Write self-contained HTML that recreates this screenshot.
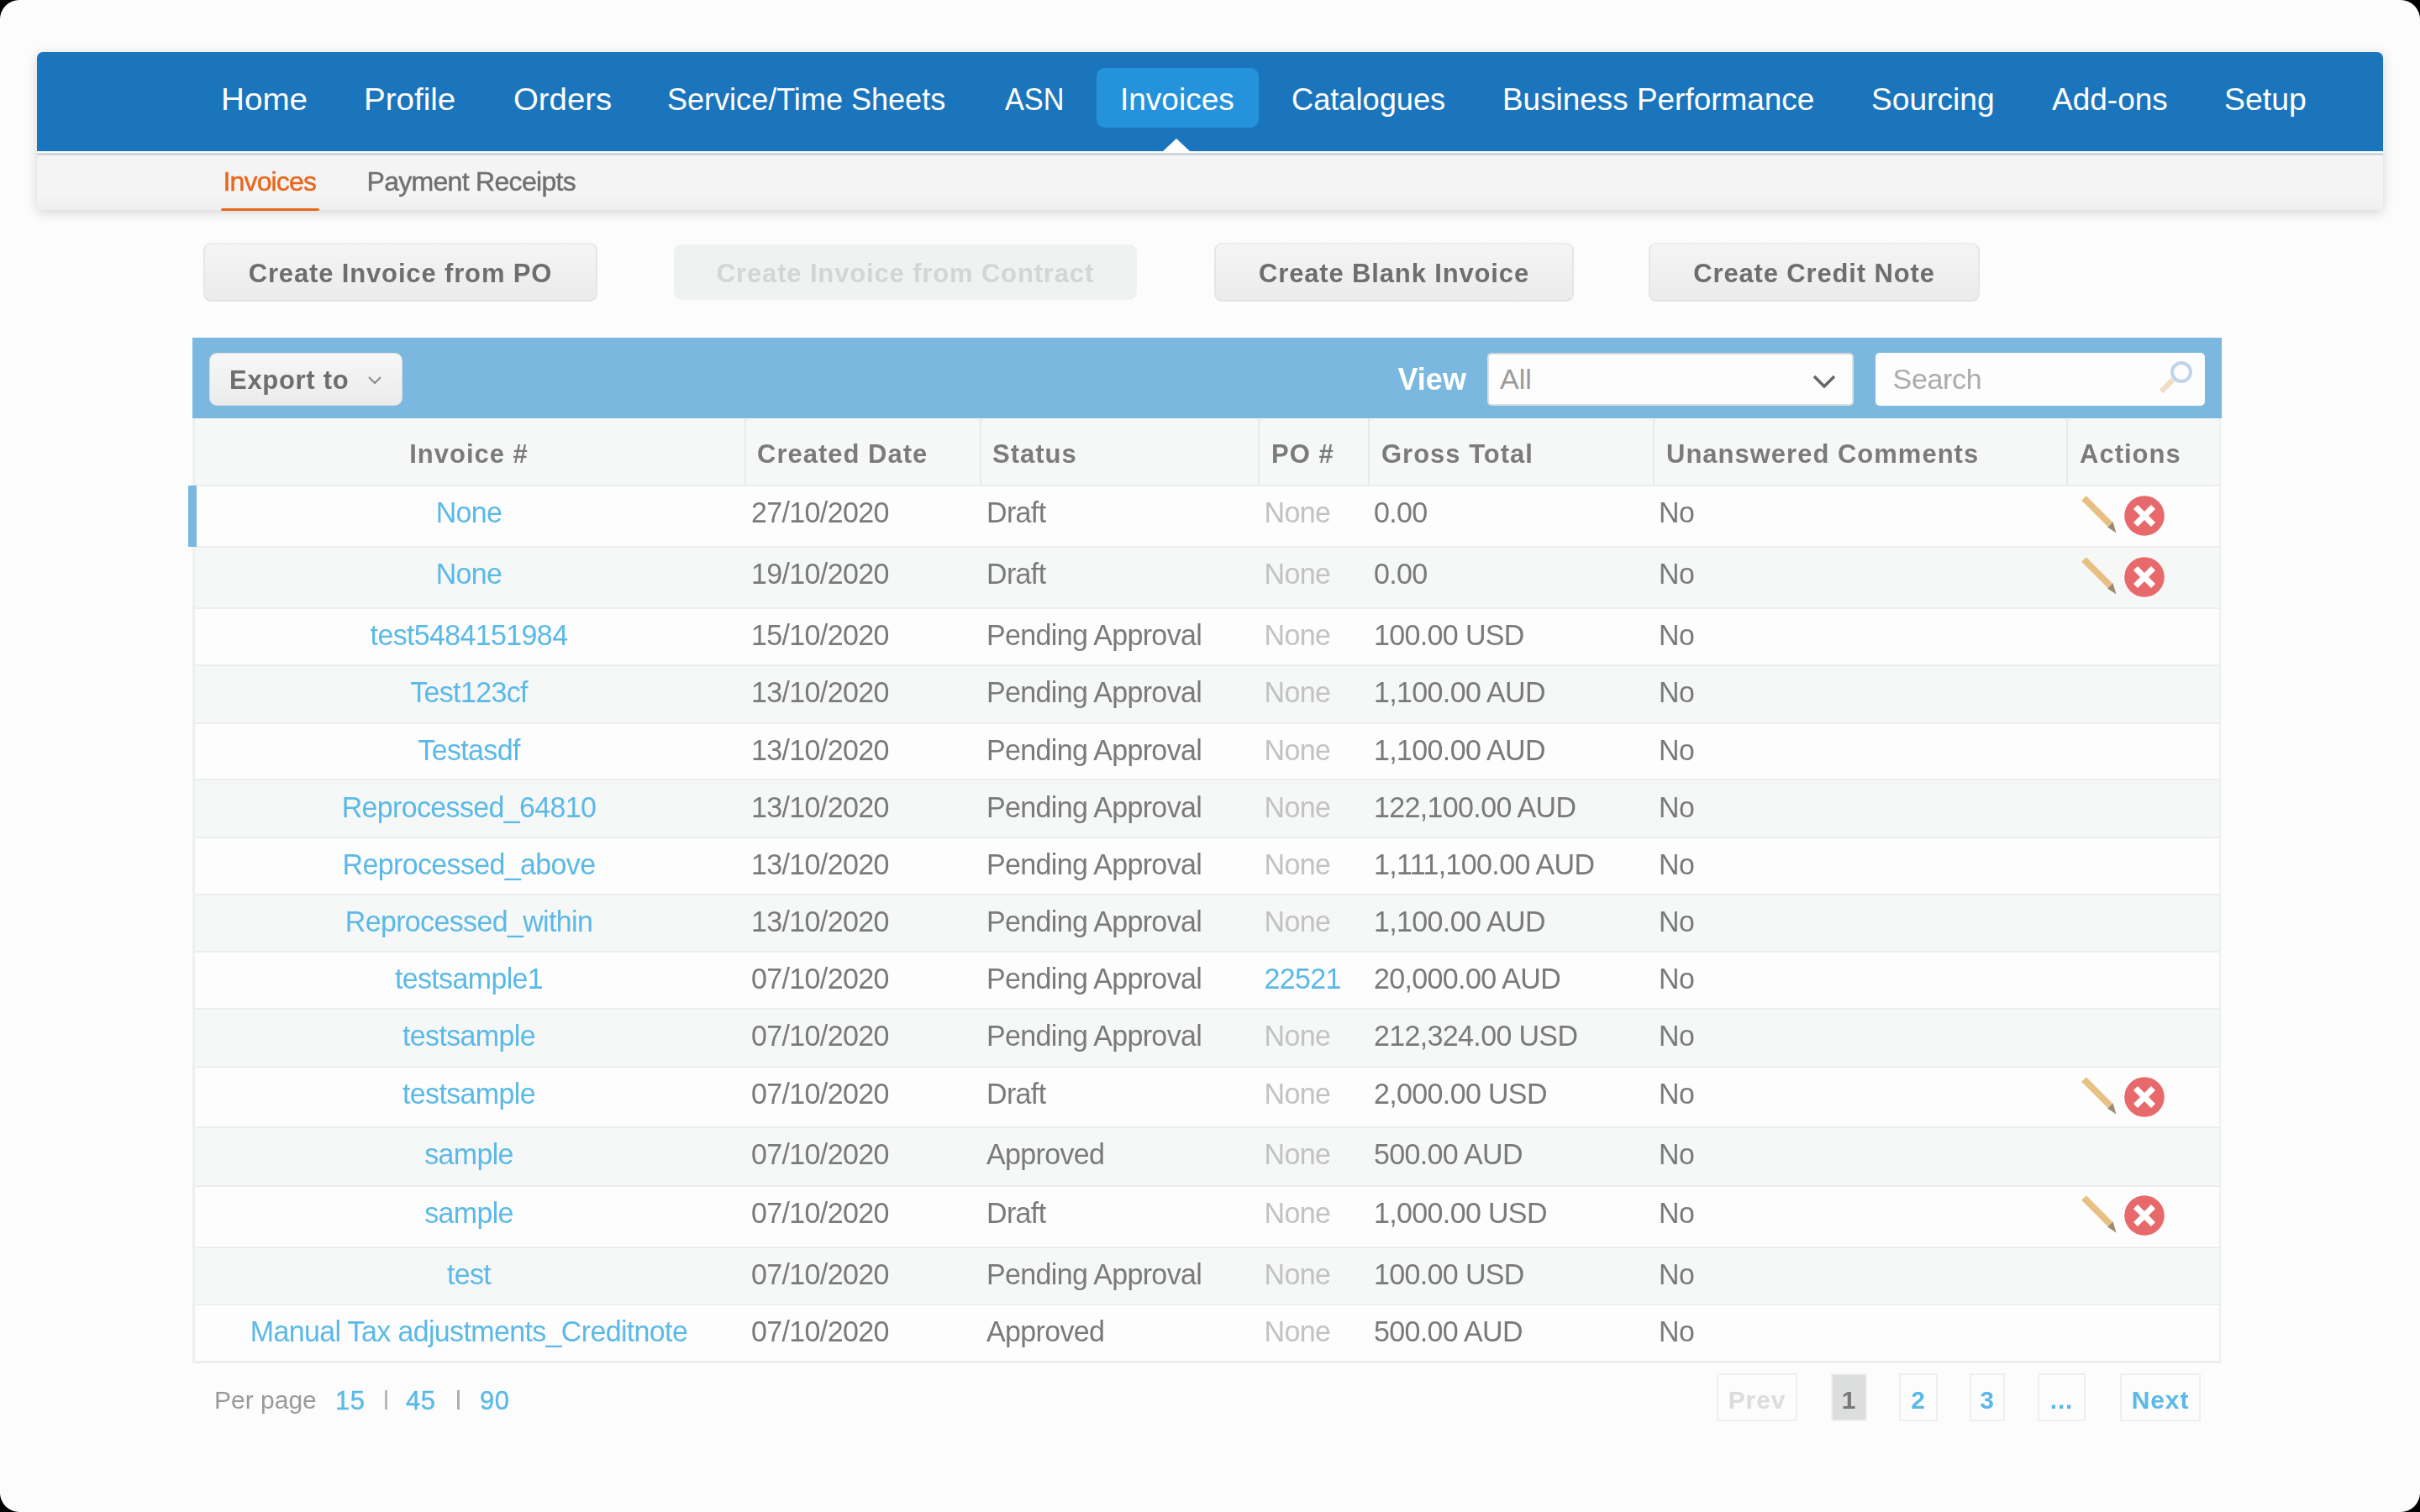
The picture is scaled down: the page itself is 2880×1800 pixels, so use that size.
<!DOCTYPE html>
<html><head><meta charset="utf-8"><title>Invoices</title>
<style>
html,body{margin:0;padding:0;background:#000;}
body{width:2880px;height:1800px;overflow:hidden;position:relative;font-family:"Liberation Sans",sans-serif;}
.page{position:absolute;left:0;top:0;width:2880px;height:1800px;background:#fcfcfc;border-radius:23px;overflow:hidden;}
.r{position:absolute;}
.t{position:absolute;white-space:nowrap;}
.inner{position:absolute;left:0;top:0;width:2880px;height:1800px;filter:blur(0.5px);}
</style></head><body><div class="page"><div class="inner">
<div class="r" style="left:44px;top:62px;width:2792px;height:188px;background:linear-gradient(#f4f4f4 0px,#f4f4f4 170px,#efefef 188px);border-radius:7px 7px 4px 4px;box-shadow:0 3px 14px rgba(0,0,0,0.16);"></div>
<div class="r" style="left:44px;top:62px;width:2792px;height:118px;background:#1b75bd;border-radius:7px 7px 0 0;"></div>
<div class="r" style="left:44px;top:180px;width:2792px;height:2px;background:#ffffff;"></div>
<div class="r" style="left:44px;top:182px;width:2792px;height:3px;background:#ccd8dc;"></div>
<div class="r" style="left:1305px;top:81px;width:193px;height:71px;background:#2593db;border-radius:10px;"></div>
<div class="r" style="left:1384px;top:165px;width:0;height:0;border-left:16px solid transparent;border-right:16px solid transparent;border-bottom:15px solid #fff;"></div>
<div class="t" style="left:262.85px;top:99.68px;font-size:37px;line-height:37px;color:#ffffff;transform:scaleX(1.0441);transform-origin:0 0;">Home</div>
<div class="t" style="left:433.47px;top:99.68px;font-size:37px;line-height:37px;color:#ffffff;transform:scaleX(1.0420);transform-origin:0 0;">Profile</div>
<div class="t" style="left:610.52px;top:99.68px;font-size:37px;line-height:37px;color:#ffffff;transform:scaleX(1.0358);transform-origin:0 0;">Orders</div>
<div class="t" style="left:794.47px;top:99.68px;font-size:37px;line-height:37px;color:#ffffff;transform:scaleX(0.9741);transform-origin:0 0;">Service/Time Sheets</div>
<div class="t" style="left:1196.08px;top:99.68px;font-size:37px;line-height:37px;color:#ffffff;transform:scaleX(0.9250);transform-origin:0 0;">ASN</div>
<div class="t" style="left:1333.0px;top:99.68px;font-size:37px;line-height:37px;color:#ffffff;transform:scaleX(1.0000);transform-origin:0 0;">Invoices</div>
<div class="t" style="left:1537.04px;top:99.68px;font-size:37px;line-height:37px;color:#ffffff;transform:scaleX(0.9783);transform-origin:0 0;">Catalogues</div>
<div class="t" style="left:1788.01px;top:99.68px;font-size:37px;line-height:37px;color:#ffffff;transform:scaleX(0.9973);transform-origin:0 0;">Business Performance</div>
<div class="t" style="left:2226.99px;top:99.68px;font-size:37px;line-height:37px;color:#ffffff;transform:scaleX(1.0035);transform-origin:0 0;">Sourcing</div>
<div class="t" style="left:2442.0px;top:99.68px;font-size:37px;line-height:37px;color:#ffffff;transform:scaleX(1.0000);transform-origin:0 0;">Add-ons</div>
<div class="t" style="left:2647.17px;top:99.68px;font-size:37px;line-height:37px;color:#ffffff;transform:scaleX(1.0118);transform-origin:0 0;">Setup</div>
<div class="t" style="left:265.5px;top:199.71px;font-size:32px;line-height:32px;color:#e8671e;letter-spacing:-0.85px;-webkit-text-stroke:0.45px #e8671e;">Invoices</div>
<div class="r" style="left:263px;top:248px;width:117px;height:3px;background:#e8671e;border-radius:2px;"></div>
<div class="t" style="left:436.5px;top:199.71px;font-size:32px;line-height:32px;color:#707070;letter-spacing:-0.7px;-webkit-text-stroke:0.45px #707070;">Payment Receipts</div>
<div class="r" style="left:242px;top:289px;width:469px;height:70px;background:linear-gradient(#f5f5f5,#ebebeb);border:2px solid #e6e6e6;border-top-color:#ececec;border-bottom-color:#e2e2e2;box-sizing:border-box;border-radius:9px;"></div>
<div class="t" style="left:142.0px;width:669px;text-align:center;top:310.26px;font-size:31px;line-height:31px;color:#6e6e6e;font-weight:700;letter-spacing:0.85px;">Create Invoice from PO</div>
<div class="r" style="left:802px;top:291px;width:551px;height:66px;background:#f0f1f1;border-radius:9px;"></div>
<div class="t" style="left:702.0px;width:751px;text-align:center;top:310.26px;font-size:31px;line-height:31px;color:#d4d5d5;font-weight:700;letter-spacing:0.85px;">Create Invoice from Contract</div>
<div class="r" style="left:1445px;top:289px;width:428px;height:70px;background:linear-gradient(#f5f5f5,#ebebeb);border:2px solid #e6e6e6;border-top-color:#ececec;border-bottom-color:#e2e2e2;box-sizing:border-box;border-radius:9px;"></div>
<div class="t" style="left:1345.0px;width:628px;text-align:center;top:310.26px;font-size:31px;line-height:31px;color:#6e6e6e;font-weight:700;letter-spacing:0.85px;">Create Blank Invoice</div>
<div class="r" style="left:1962px;top:289px;width:394px;height:70px;background:linear-gradient(#f5f5f5,#ebebeb);border:2px solid #e6e6e6;border-top-color:#ececec;border-bottom-color:#e2e2e2;box-sizing:border-box;border-radius:9px;"></div>
<div class="t" style="left:1862.0px;width:594px;text-align:center;top:310.26px;font-size:31px;line-height:31px;color:#6e6e6e;font-weight:700;letter-spacing:0.85px;">Create Credit Note</div>
<div class="r" style="left:229px;top:402px;width:2415px;height:96px;background:#7ab8e0;"></div>
<div class="r" style="left:249px;top:420px;width:230px;height:63px;background:linear-gradient(#f7f7f7,#ebebeb);border:1px solid #dcdcdc;box-sizing:border-box;border-radius:9px;"></div>
<div class="t" style="left:273px;top:436.76px;font-size:31px;line-height:31px;color:#6e6e6e;font-weight:700;letter-spacing:0.7px;">Export to</div>
<svg class="r" style="left:436px;top:446px" width="20" height="14" viewBox="0 0 20 14"><polyline points="3,3 10,10 17,3" fill="none" stroke="#8a8a8a" stroke-width="2"/></svg>
<div class="t" style="left:1663.5px;top:434.33px;font-size:36px;line-height:36px;color:#ffffff;font-weight:700;">View</div>
<div class="r" style="left:1770px;top:420px;width:436px;height:63px;background:#fdfdfd;border:2px solid #dcdfe0;border-top-color:#d2d6d7;box-sizing:border-box;border-radius:5px;"></div>
<div class="t" style="left:1785px;top:433.82px;font-size:34px;line-height:34px;color:#9a9a9a;">All</div>
<svg class="r" style="left:2155px;top:443px" width="32" height="22" viewBox="0 0 32 22"><polyline points="4,5 16,17 28,5" fill="none" stroke="#666" stroke-width="3.5"/></svg>
<div class="r" style="left:2232px;top:420px;width:392px;height:63px;background:#fdfdfd;border-radius:5px;"></div>
<div class="t" style="left:2252.5px;top:433.82px;font-size:34px;line-height:34px;color:#ababab;letter-spacing:-0.3px;">Search</div>
<svg class="r" style="left:2560px;top:424px" width="56" height="52" viewBox="0 0 56 52"><circle cx="36" cy="19" r="11" fill="none" stroke="#bfd4ec" stroke-width="4"/><line x1="26" y1="28" x2="12" y2="42" stroke="#f2dcc3" stroke-width="6.5" stroke-linecap="butt"/></svg>
<div class="r" style="left:229px;top:498px;width:2414px;height:80px;background:#f6f8f8;"></div>
<div class="r" style="left:886px;top:498px;width:2px;height:80px;background:#e8ebeb;"></div>
<div class="r" style="left:1166px;top:498px;width:2px;height:80px;background:#e8ebeb;"></div>
<div class="r" style="left:1497px;top:498px;width:2px;height:80px;background:#e8ebeb;"></div>
<div class="r" style="left:1628px;top:498px;width:2px;height:80px;background:#e8ebeb;"></div>
<div class="r" style="left:1967px;top:498px;width:2px;height:80px;background:#e8ebeb;"></div>
<div class="r" style="left:2459px;top:498px;width:2px;height:80px;background:#e8ebeb;"></div>
<div class="t" style="left:258.0px;width:600px;text-align:center;top:525.26px;font-size:31px;line-height:31px;color:#7b7b7b;font-weight:700;letter-spacing:1.0px;">Invoice #</div>
<div class="t" style="left:901px;top:525.26px;font-size:31px;line-height:31px;color:#7b7b7b;font-weight:700;letter-spacing:1.0px;">Created Date</div>
<div class="t" style="left:1181px;top:525.26px;font-size:31px;line-height:31px;color:#7b7b7b;font-weight:700;letter-spacing:1.0px;">Status</div>
<div class="t" style="left:1513px;top:525.26px;font-size:31px;line-height:31px;color:#7b7b7b;font-weight:700;letter-spacing:1.0px;">PO #</div>
<div class="t" style="left:1644px;top:525.26px;font-size:31px;line-height:31px;color:#7b7b7b;font-weight:700;letter-spacing:1.0px;">Gross Total</div>
<div class="t" style="left:1983px;top:525.26px;font-size:31px;line-height:31px;color:#7b7b7b;font-weight:700;letter-spacing:1.0px;">Unanswered Comments</div>
<div class="t" style="left:2475px;top:525.26px;font-size:31px;line-height:31px;color:#7b7b7b;font-weight:700;letter-spacing:1.0px;">Actions</div>
<div class="r" style="left:229px;top:578px;width:2414px;height:73px;background:#fdfdfd;"></div>
<div class="r" style="left:229px;top:577px;width:2414px;height:2px;background:#eceeee;"></div>
<div class="t" style="left:238.0px;width:640px;text-align:center;top:593.22px;font-size:34px;line-height:34px;color:#5bb9e7;letter-spacing:-0.65px;transform:scaleY(1.055);transform-origin:0 28.78px;">None</div>
<div class="t" style="left:894px;top:593.22px;font-size:34px;line-height:34px;color:#7a7a7a;letter-spacing:-0.65px;transform:scaleY(1.055);transform-origin:0 28.78px;">27/10/2020</div>
<div class="t" style="left:1174px;top:593.22px;font-size:34px;line-height:34px;color:#7a7a7a;letter-spacing:-0.65px;transform:scaleY(1.055);transform-origin:0 28.78px;">Draft</div>
<div class="t" style="left:1504.5px;top:593.22px;font-size:34px;line-height:34px;color:#c2c2c2;letter-spacing:-0.65px;transform:scaleY(1.055);transform-origin:0 28.78px;">None</div>
<div class="t" style="left:1635px;top:593.22px;font-size:34px;line-height:34px;color:#7a7a7a;letter-spacing:-0.65px;transform:scaleY(1.055);transform-origin:0 28.78px;">0.00</div>
<div class="t" style="left:1974px;top:593.22px;font-size:34px;line-height:34px;color:#7a7a7a;letter-spacing:-0.65px;transform:scaleY(1.055);transform-origin:0 28.78px;">No</div>
<svg class="r" style="left:2470px;top:582.5px" width="110" height="60" viewBox="0 0 110 60"><line x1="10" y1="10" x2="41" y2="41" stroke="#e8c182" stroke-width="8"/><polygon points="38,44.5 44.5,38 48.5,51.5" fill="#9e8b6a"/><circle cx="82" cy="31" r="23.8" fill="#e8696b"/><line x1="71.5" y1="20.5" x2="92.5" y2="41.5" stroke="#fff" stroke-width="7"/><line x1="92.5" y1="20.5" x2="71.5" y2="41.5" stroke="#fff" stroke-width="7"/></svg>
<div class="r" style="left:229px;top:651px;width:2414px;height:73px;background:#f6f8f8;"></div>
<div class="r" style="left:229px;top:650px;width:2414px;height:2px;background:#eceeee;"></div>
<div class="t" style="left:238.0px;width:640px;text-align:center;top:666.22px;font-size:34px;line-height:34px;color:#5bb9e7;letter-spacing:-0.65px;transform:scaleY(1.055);transform-origin:0 28.78px;">None</div>
<div class="t" style="left:894px;top:666.22px;font-size:34px;line-height:34px;color:#7a7a7a;letter-spacing:-0.65px;transform:scaleY(1.055);transform-origin:0 28.78px;">19/10/2020</div>
<div class="t" style="left:1174px;top:666.22px;font-size:34px;line-height:34px;color:#7a7a7a;letter-spacing:-0.65px;transform:scaleY(1.055);transform-origin:0 28.78px;">Draft</div>
<div class="t" style="left:1504.5px;top:666.22px;font-size:34px;line-height:34px;color:#c2c2c2;letter-spacing:-0.65px;transform:scaleY(1.055);transform-origin:0 28.78px;">None</div>
<div class="t" style="left:1635px;top:666.22px;font-size:34px;line-height:34px;color:#7a7a7a;letter-spacing:-0.65px;transform:scaleY(1.055);transform-origin:0 28.78px;">0.00</div>
<div class="t" style="left:1974px;top:666.22px;font-size:34px;line-height:34px;color:#7a7a7a;letter-spacing:-0.65px;transform:scaleY(1.055);transform-origin:0 28.78px;">No</div>
<svg class="r" style="left:2470px;top:655.5px" width="110" height="60" viewBox="0 0 110 60"><line x1="10" y1="10" x2="41" y2="41" stroke="#e8c182" stroke-width="8"/><polygon points="38,44.5 44.5,38 48.5,51.5" fill="#9e8b6a"/><circle cx="82" cy="31" r="23.8" fill="#e8696b"/><line x1="71.5" y1="20.5" x2="92.5" y2="41.5" stroke="#fff" stroke-width="7"/><line x1="92.5" y1="20.5" x2="71.5" y2="41.5" stroke="#fff" stroke-width="7"/></svg>
<div class="r" style="left:229px;top:724px;width:2414px;height:68px;background:#fdfdfd;"></div>
<div class="r" style="left:229px;top:723px;width:2414px;height:2px;background:#eceeee;"></div>
<div class="t" style="left:238.0px;width:640px;text-align:center;top:739.22px;font-size:34px;line-height:34px;color:#5bb9e7;letter-spacing:-0.65px;transform:scaleY(1.055);transform-origin:0 28.78px;">test5484151984</div>
<div class="t" style="left:894px;top:739.22px;font-size:34px;line-height:34px;color:#7a7a7a;letter-spacing:-0.65px;transform:scaleY(1.055);transform-origin:0 28.78px;">15/10/2020</div>
<div class="t" style="left:1174px;top:739.22px;font-size:34px;line-height:34px;color:#7a7a7a;letter-spacing:-0.65px;transform:scaleY(1.055);transform-origin:0 28.78px;">Pending Approval</div>
<div class="t" style="left:1504.5px;top:739.22px;font-size:34px;line-height:34px;color:#c2c2c2;letter-spacing:-0.65px;transform:scaleY(1.055);transform-origin:0 28.78px;">None</div>
<div class="t" style="left:1635px;top:739.22px;font-size:34px;line-height:34px;color:#7a7a7a;letter-spacing:-0.65px;transform:scaleY(1.055);transform-origin:0 28.78px;">100.00 USD</div>
<div class="t" style="left:1974px;top:739.22px;font-size:34px;line-height:34px;color:#7a7a7a;letter-spacing:-0.65px;transform:scaleY(1.055);transform-origin:0 28.78px;">No</div>
<div class="r" style="left:229px;top:792px;width:2414px;height:69px;background:#f6f8f8;"></div>
<div class="r" style="left:229px;top:791px;width:2414px;height:2px;background:#eceeee;"></div>
<div class="t" style="left:238.0px;width:640px;text-align:center;top:807.22px;font-size:34px;line-height:34px;color:#5bb9e7;letter-spacing:-0.65px;transform:scaleY(1.055);transform-origin:0 28.78px;">Test123cf</div>
<div class="t" style="left:894px;top:807.22px;font-size:34px;line-height:34px;color:#7a7a7a;letter-spacing:-0.65px;transform:scaleY(1.055);transform-origin:0 28.78px;">13/10/2020</div>
<div class="t" style="left:1174px;top:807.22px;font-size:34px;line-height:34px;color:#7a7a7a;letter-spacing:-0.65px;transform:scaleY(1.055);transform-origin:0 28.78px;">Pending Approval</div>
<div class="t" style="left:1504.5px;top:807.22px;font-size:34px;line-height:34px;color:#c2c2c2;letter-spacing:-0.65px;transform:scaleY(1.055);transform-origin:0 28.78px;">None</div>
<div class="t" style="left:1635px;top:807.22px;font-size:34px;line-height:34px;color:#7a7a7a;letter-spacing:-0.65px;transform:scaleY(1.055);transform-origin:0 28.78px;">1,100.00 AUD</div>
<div class="t" style="left:1974px;top:807.22px;font-size:34px;line-height:34px;color:#7a7a7a;letter-spacing:-0.65px;transform:scaleY(1.055);transform-origin:0 28.78px;">No</div>
<div class="r" style="left:229px;top:861px;width:2414px;height:67px;background:#fdfdfd;"></div>
<div class="r" style="left:229px;top:860px;width:2414px;height:2px;background:#eceeee;"></div>
<div class="t" style="left:238.0px;width:640px;text-align:center;top:876.22px;font-size:34px;line-height:34px;color:#5bb9e7;letter-spacing:-0.65px;transform:scaleY(1.055);transform-origin:0 28.78px;">Testasdf</div>
<div class="t" style="left:894px;top:876.22px;font-size:34px;line-height:34px;color:#7a7a7a;letter-spacing:-0.65px;transform:scaleY(1.055);transform-origin:0 28.78px;">13/10/2020</div>
<div class="t" style="left:1174px;top:876.22px;font-size:34px;line-height:34px;color:#7a7a7a;letter-spacing:-0.65px;transform:scaleY(1.055);transform-origin:0 28.78px;">Pending Approval</div>
<div class="t" style="left:1504.5px;top:876.22px;font-size:34px;line-height:34px;color:#c2c2c2;letter-spacing:-0.65px;transform:scaleY(1.055);transform-origin:0 28.78px;">None</div>
<div class="t" style="left:1635px;top:876.22px;font-size:34px;line-height:34px;color:#7a7a7a;letter-spacing:-0.65px;transform:scaleY(1.055);transform-origin:0 28.78px;">1,100.00 AUD</div>
<div class="t" style="left:1974px;top:876.22px;font-size:34px;line-height:34px;color:#7a7a7a;letter-spacing:-0.65px;transform:scaleY(1.055);transform-origin:0 28.78px;">No</div>
<div class="r" style="left:229px;top:928px;width:2414px;height:69px;background:#f6f8f8;"></div>
<div class="r" style="left:229px;top:927px;width:2414px;height:2px;background:#eceeee;"></div>
<div class="t" style="left:238.0px;width:640px;text-align:center;top:943.72px;font-size:34px;line-height:34px;color:#5bb9e7;letter-spacing:-0.65px;transform:scaleY(1.055);transform-origin:0 28.78px;">Reprocessed_64810</div>
<div class="t" style="left:894px;top:943.72px;font-size:34px;line-height:34px;color:#7a7a7a;letter-spacing:-0.65px;transform:scaleY(1.055);transform-origin:0 28.78px;">13/10/2020</div>
<div class="t" style="left:1174px;top:943.72px;font-size:34px;line-height:34px;color:#7a7a7a;letter-spacing:-0.65px;transform:scaleY(1.055);transform-origin:0 28.78px;">Pending Approval</div>
<div class="t" style="left:1504.5px;top:943.72px;font-size:34px;line-height:34px;color:#c2c2c2;letter-spacing:-0.65px;transform:scaleY(1.055);transform-origin:0 28.78px;">None</div>
<div class="t" style="left:1635px;top:943.72px;font-size:34px;line-height:34px;color:#7a7a7a;letter-spacing:-0.65px;transform:scaleY(1.055);transform-origin:0 28.78px;">122,100.00 AUD</div>
<div class="t" style="left:1974px;top:943.72px;font-size:34px;line-height:34px;color:#7a7a7a;letter-spacing:-0.65px;transform:scaleY(1.055);transform-origin:0 28.78px;">No</div>
<div class="r" style="left:229px;top:997px;width:2414px;height:68px;background:#fdfdfd;"></div>
<div class="r" style="left:229px;top:996px;width:2414px;height:2px;background:#eceeee;"></div>
<div class="t" style="left:238.0px;width:640px;text-align:center;top:1012.22px;font-size:34px;line-height:34px;color:#5bb9e7;letter-spacing:-0.65px;transform:scaleY(1.055);transform-origin:0 28.78px;">Reprocessed_above</div>
<div class="t" style="left:894px;top:1012.22px;font-size:34px;line-height:34px;color:#7a7a7a;letter-spacing:-0.65px;transform:scaleY(1.055);transform-origin:0 28.78px;">13/10/2020</div>
<div class="t" style="left:1174px;top:1012.22px;font-size:34px;line-height:34px;color:#7a7a7a;letter-spacing:-0.65px;transform:scaleY(1.055);transform-origin:0 28.78px;">Pending Approval</div>
<div class="t" style="left:1504.5px;top:1012.22px;font-size:34px;line-height:34px;color:#c2c2c2;letter-spacing:-0.65px;transform:scaleY(1.055);transform-origin:0 28.78px;">None</div>
<div class="t" style="left:1635px;top:1012.22px;font-size:34px;line-height:34px;color:#7a7a7a;letter-spacing:-0.65px;transform:scaleY(1.055);transform-origin:0 28.78px;">1,111,100.00 AUD</div>
<div class="t" style="left:1974px;top:1012.22px;font-size:34px;line-height:34px;color:#7a7a7a;letter-spacing:-0.65px;transform:scaleY(1.055);transform-origin:0 28.78px;">No</div>
<div class="r" style="left:229px;top:1065px;width:2414px;height:68px;background:#f6f8f8;"></div>
<div class="r" style="left:229px;top:1064px;width:2414px;height:2px;background:#eceeee;"></div>
<div class="t" style="left:238.0px;width:640px;text-align:center;top:1080.22px;font-size:34px;line-height:34px;color:#5bb9e7;letter-spacing:-0.65px;transform:scaleY(1.055);transform-origin:0 28.78px;">Reprocessed_within</div>
<div class="t" style="left:894px;top:1080.22px;font-size:34px;line-height:34px;color:#7a7a7a;letter-spacing:-0.65px;transform:scaleY(1.055);transform-origin:0 28.78px;">13/10/2020</div>
<div class="t" style="left:1174px;top:1080.22px;font-size:34px;line-height:34px;color:#7a7a7a;letter-spacing:-0.65px;transform:scaleY(1.055);transform-origin:0 28.78px;">Pending Approval</div>
<div class="t" style="left:1504.5px;top:1080.22px;font-size:34px;line-height:34px;color:#c2c2c2;letter-spacing:-0.65px;transform:scaleY(1.055);transform-origin:0 28.78px;">None</div>
<div class="t" style="left:1635px;top:1080.22px;font-size:34px;line-height:34px;color:#7a7a7a;letter-spacing:-0.65px;transform:scaleY(1.055);transform-origin:0 28.78px;">1,100.00 AUD</div>
<div class="t" style="left:1974px;top:1080.22px;font-size:34px;line-height:34px;color:#7a7a7a;letter-spacing:-0.65px;transform:scaleY(1.055);transform-origin:0 28.78px;">No</div>
<div class="r" style="left:229px;top:1133px;width:2414px;height:68px;background:#fdfdfd;"></div>
<div class="r" style="left:229px;top:1132px;width:2414px;height:2px;background:#eceeee;"></div>
<div class="t" style="left:238.0px;width:640px;text-align:center;top:1148.22px;font-size:34px;line-height:34px;color:#5bb9e7;letter-spacing:-0.65px;transform:scaleY(1.055);transform-origin:0 28.78px;">testsample1</div>
<div class="t" style="left:894px;top:1148.22px;font-size:34px;line-height:34px;color:#7a7a7a;letter-spacing:-0.65px;transform:scaleY(1.055);transform-origin:0 28.78px;">07/10/2020</div>
<div class="t" style="left:1174px;top:1148.22px;font-size:34px;line-height:34px;color:#7a7a7a;letter-spacing:-0.65px;transform:scaleY(1.055);transform-origin:0 28.78px;">Pending Approval</div>
<div class="t" style="left:1504.5px;top:1148.22px;font-size:34px;line-height:34px;color:#5bb9e7;letter-spacing:-0.65px;transform:scaleY(1.055);transform-origin:0 28.78px;">22521</div>
<div class="t" style="left:1635px;top:1148.22px;font-size:34px;line-height:34px;color:#7a7a7a;letter-spacing:-0.65px;transform:scaleY(1.055);transform-origin:0 28.78px;">20,000.00 AUD</div>
<div class="t" style="left:1974px;top:1148.22px;font-size:34px;line-height:34px;color:#7a7a7a;letter-spacing:-0.65px;transform:scaleY(1.055);transform-origin:0 28.78px;">No</div>
<div class="r" style="left:229px;top:1201px;width:2414px;height:69px;background:#f6f8f8;"></div>
<div class="r" style="left:229px;top:1200px;width:2414px;height:2px;background:#eceeee;"></div>
<div class="t" style="left:238.0px;width:640px;text-align:center;top:1216.22px;font-size:34px;line-height:34px;color:#5bb9e7;letter-spacing:-0.65px;transform:scaleY(1.055);transform-origin:0 28.78px;">testsample</div>
<div class="t" style="left:894px;top:1216.22px;font-size:34px;line-height:34px;color:#7a7a7a;letter-spacing:-0.65px;transform:scaleY(1.055);transform-origin:0 28.78px;">07/10/2020</div>
<div class="t" style="left:1174px;top:1216.22px;font-size:34px;line-height:34px;color:#7a7a7a;letter-spacing:-0.65px;transform:scaleY(1.055);transform-origin:0 28.78px;">Pending Approval</div>
<div class="t" style="left:1504.5px;top:1216.22px;font-size:34px;line-height:34px;color:#c2c2c2;letter-spacing:-0.65px;transform:scaleY(1.055);transform-origin:0 28.78px;">None</div>
<div class="t" style="left:1635px;top:1216.22px;font-size:34px;line-height:34px;color:#7a7a7a;letter-spacing:-0.65px;transform:scaleY(1.055);transform-origin:0 28.78px;">212,324.00 USD</div>
<div class="t" style="left:1974px;top:1216.22px;font-size:34px;line-height:34px;color:#7a7a7a;letter-spacing:-0.65px;transform:scaleY(1.055);transform-origin:0 28.78px;">No</div>
<div class="r" style="left:229px;top:1270px;width:2414px;height:72px;background:#fdfdfd;"></div>
<div class="r" style="left:229px;top:1269px;width:2414px;height:2px;background:#eceeee;"></div>
<div class="t" style="left:238.0px;width:640px;text-align:center;top:1285.22px;font-size:34px;line-height:34px;color:#5bb9e7;letter-spacing:-0.65px;transform:scaleY(1.055);transform-origin:0 28.78px;">testsample</div>
<div class="t" style="left:894px;top:1285.22px;font-size:34px;line-height:34px;color:#7a7a7a;letter-spacing:-0.65px;transform:scaleY(1.055);transform-origin:0 28.78px;">07/10/2020</div>
<div class="t" style="left:1174px;top:1285.22px;font-size:34px;line-height:34px;color:#7a7a7a;letter-spacing:-0.65px;transform:scaleY(1.055);transform-origin:0 28.78px;">Draft</div>
<div class="t" style="left:1504.5px;top:1285.22px;font-size:34px;line-height:34px;color:#c2c2c2;letter-spacing:-0.65px;transform:scaleY(1.055);transform-origin:0 28.78px;">None</div>
<div class="t" style="left:1635px;top:1285.22px;font-size:34px;line-height:34px;color:#7a7a7a;letter-spacing:-0.65px;transform:scaleY(1.055);transform-origin:0 28.78px;">2,000.00 USD</div>
<div class="t" style="left:1974px;top:1285.22px;font-size:34px;line-height:34px;color:#7a7a7a;letter-spacing:-0.65px;transform:scaleY(1.055);transform-origin:0 28.78px;">No</div>
<svg class="r" style="left:2470px;top:1274.5px" width="110" height="60" viewBox="0 0 110 60"><line x1="10" y1="10" x2="41" y2="41" stroke="#e8c182" stroke-width="8"/><polygon points="38,44.5 44.5,38 48.5,51.5" fill="#9e8b6a"/><circle cx="82" cy="31" r="23.8" fill="#e8696b"/><line x1="71.5" y1="20.5" x2="92.5" y2="41.5" stroke="#fff" stroke-width="7"/><line x1="92.5" y1="20.5" x2="71.5" y2="41.5" stroke="#fff" stroke-width="7"/></svg>
<div class="r" style="left:229px;top:1342px;width:2414px;height:70px;background:#f6f8f8;"></div>
<div class="r" style="left:229px;top:1341px;width:2414px;height:2px;background:#eceeee;"></div>
<div class="t" style="left:238.0px;width:640px;text-align:center;top:1357.22px;font-size:34px;line-height:34px;color:#5bb9e7;letter-spacing:-0.65px;transform:scaleY(1.055);transform-origin:0 28.78px;">sample</div>
<div class="t" style="left:894px;top:1357.22px;font-size:34px;line-height:34px;color:#7a7a7a;letter-spacing:-0.65px;transform:scaleY(1.055);transform-origin:0 28.78px;">07/10/2020</div>
<div class="t" style="left:1174px;top:1357.22px;font-size:34px;line-height:34px;color:#7a7a7a;letter-spacing:-0.65px;transform:scaleY(1.055);transform-origin:0 28.78px;">Approved</div>
<div class="t" style="left:1504.5px;top:1357.22px;font-size:34px;line-height:34px;color:#c2c2c2;letter-spacing:-0.65px;transform:scaleY(1.055);transform-origin:0 28.78px;">None</div>
<div class="t" style="left:1635px;top:1357.22px;font-size:34px;line-height:34px;color:#7a7a7a;letter-spacing:-0.65px;transform:scaleY(1.055);transform-origin:0 28.78px;">500.00 AUD</div>
<div class="t" style="left:1974px;top:1357.22px;font-size:34px;line-height:34px;color:#7a7a7a;letter-spacing:-0.65px;transform:scaleY(1.055);transform-origin:0 28.78px;">No</div>
<div class="r" style="left:229px;top:1412px;width:2414px;height:73px;background:#fdfdfd;"></div>
<div class="r" style="left:229px;top:1411px;width:2414px;height:2px;background:#eceeee;"></div>
<div class="t" style="left:238.0px;width:640px;text-align:center;top:1426.72px;font-size:34px;line-height:34px;color:#5bb9e7;letter-spacing:-0.65px;transform:scaleY(1.055);transform-origin:0 28.78px;">sample</div>
<div class="t" style="left:894px;top:1426.72px;font-size:34px;line-height:34px;color:#7a7a7a;letter-spacing:-0.65px;transform:scaleY(1.055);transform-origin:0 28.78px;">07/10/2020</div>
<div class="t" style="left:1174px;top:1426.72px;font-size:34px;line-height:34px;color:#7a7a7a;letter-spacing:-0.65px;transform:scaleY(1.055);transform-origin:0 28.78px;">Draft</div>
<div class="t" style="left:1504.5px;top:1426.72px;font-size:34px;line-height:34px;color:#c2c2c2;letter-spacing:-0.65px;transform:scaleY(1.055);transform-origin:0 28.78px;">None</div>
<div class="t" style="left:1635px;top:1426.72px;font-size:34px;line-height:34px;color:#7a7a7a;letter-spacing:-0.65px;transform:scaleY(1.055);transform-origin:0 28.78px;">1,000.00 USD</div>
<div class="t" style="left:1974px;top:1426.72px;font-size:34px;line-height:34px;color:#7a7a7a;letter-spacing:-0.65px;transform:scaleY(1.055);transform-origin:0 28.78px;">No</div>
<svg class="r" style="left:2470px;top:1416.0px" width="110" height="60" viewBox="0 0 110 60"><line x1="10" y1="10" x2="41" y2="41" stroke="#e8c182" stroke-width="8"/><polygon points="38,44.5 44.5,38 48.5,51.5" fill="#9e8b6a"/><circle cx="82" cy="31" r="23.8" fill="#e8696b"/><line x1="71.5" y1="20.5" x2="92.5" y2="41.5" stroke="#fff" stroke-width="7"/><line x1="92.5" y1="20.5" x2="71.5" y2="41.5" stroke="#fff" stroke-width="7"/></svg>
<div class="r" style="left:229px;top:1485px;width:2414px;height:68px;background:#f6f8f8;"></div>
<div class="r" style="left:229px;top:1484px;width:2414px;height:2px;background:#eceeee;"></div>
<div class="t" style="left:238.0px;width:640px;text-align:center;top:1500.22px;font-size:34px;line-height:34px;color:#5bb9e7;letter-spacing:-0.65px;transform:scaleY(1.055);transform-origin:0 28.78px;">test</div>
<div class="t" style="left:894px;top:1500.22px;font-size:34px;line-height:34px;color:#7a7a7a;letter-spacing:-0.65px;transform:scaleY(1.055);transform-origin:0 28.78px;">07/10/2020</div>
<div class="t" style="left:1174px;top:1500.22px;font-size:34px;line-height:34px;color:#7a7a7a;letter-spacing:-0.65px;transform:scaleY(1.055);transform-origin:0 28.78px;">Pending Approval</div>
<div class="t" style="left:1504.5px;top:1500.22px;font-size:34px;line-height:34px;color:#c2c2c2;letter-spacing:-0.65px;transform:scaleY(1.055);transform-origin:0 28.78px;">None</div>
<div class="t" style="left:1635px;top:1500.22px;font-size:34px;line-height:34px;color:#7a7a7a;letter-spacing:-0.65px;transform:scaleY(1.055);transform-origin:0 28.78px;">100.00 USD</div>
<div class="t" style="left:1974px;top:1500.22px;font-size:34px;line-height:34px;color:#7a7a7a;letter-spacing:-0.65px;transform:scaleY(1.055);transform-origin:0 28.78px;">No</div>
<div class="r" style="left:229px;top:1553px;width:2414px;height:68px;background:#fdfdfd;"></div>
<div class="r" style="left:229px;top:1552px;width:2414px;height:2px;background:#eceeee;"></div>
<div class="t" style="left:238.0px;width:640px;text-align:center;top:1568.22px;font-size:34px;line-height:34px;color:#5bb9e7;letter-spacing:-0.65px;transform:scaleY(1.055);transform-origin:0 28.78px;">Manual Tax adjustments_Creditnote</div>
<div class="t" style="left:894px;top:1568.22px;font-size:34px;line-height:34px;color:#7a7a7a;letter-spacing:-0.65px;transform:scaleY(1.055);transform-origin:0 28.78px;">07/10/2020</div>
<div class="t" style="left:1174px;top:1568.22px;font-size:34px;line-height:34px;color:#7a7a7a;letter-spacing:-0.65px;transform:scaleY(1.055);transform-origin:0 28.78px;">Approved</div>
<div class="t" style="left:1504.5px;top:1568.22px;font-size:34px;line-height:34px;color:#c2c2c2;letter-spacing:-0.65px;transform:scaleY(1.055);transform-origin:0 28.78px;">None</div>
<div class="t" style="left:1635px;top:1568.22px;font-size:34px;line-height:34px;color:#7a7a7a;letter-spacing:-0.65px;transform:scaleY(1.055);transform-origin:0 28.78px;">500.00 AUD</div>
<div class="t" style="left:1974px;top:1568.22px;font-size:34px;line-height:34px;color:#7a7a7a;letter-spacing:-0.65px;transform:scaleY(1.055);transform-origin:0 28.78px;">No</div>
<div class="r" style="left:229px;top:1620px;width:2414px;height:3px;background:#eceeee;"></div>
<div class="r" style="left:229px;top:498px;width:3px;height:1124px;background:#eef0f0;"></div>
<div class="r" style="left:2641px;top:498px;width:2px;height:1124px;background:#eef0f0;"></div>
<div class="r" style="left:224px;top:578px;width:10px;height:73px;background:#7ab8e0;"></div>
<div class="t" style="left:255px;top:1652.01px;font-size:30px;line-height:30px;color:#9a9a9a;">Per page</div>
<div class="t" style="left:399px;top:1651.56px;font-size:31px;line-height:31px;color:#5bb9e7;letter-spacing:0.6px;-webkit-text-stroke:0.4px #5bb9e7;">15</div>
<div class="r" style="left:457.5px;top:1655px;width:3.5px;height:23px;background:#b8b8b8;"></div>
<div class="t" style="left:483px;top:1651.56px;font-size:31px;line-height:31px;color:#5bb9e7;letter-spacing:0.6px;-webkit-text-stroke:0.4px #5bb9e7;">45</div>
<div class="r" style="left:543.5px;top:1655px;width:3.5px;height:23px;background:#b0b0b0;"></div>
<div class="t" style="left:571px;top:1651.56px;font-size:31px;line-height:31px;color:#5bb9e7;letter-spacing:0.6px;-webkit-text-stroke:0.4px #5bb9e7;">90</div>
<div class="r" style="left:2043px;top:1635px;width:96px;height:57px;border:2px solid #eeefef;box-sizing:border-box;background:transparent;"></div>
<div class="t" style="left:1991.0px;width:200px;text-align:center;top:1652.31px;font-size:30px;line-height:30px;color:#dcdcdc;font-weight:700;letter-spacing:0.9px;">Prev</div>
<div class="r" style="left:2179px;top:1635px;width:43px;height:57px;border:2px solid #eeefef;box-sizing:border-box;background:#dcdddd;"></div>
<div class="t" style="left:2100.5px;width:200px;text-align:center;top:1652.31px;font-size:30px;line-height:30px;color:#777777;font-weight:700;letter-spacing:0.9px;">1</div>
<div class="r" style="left:2260px;top:1635px;width:46px;height:57px;border:2px solid #eeefef;box-sizing:border-box;background:transparent;"></div>
<div class="t" style="left:2183.0px;width:200px;text-align:center;top:1652.31px;font-size:30px;line-height:30px;color:#5bb9e7;font-weight:700;letter-spacing:0.9px;">2</div>
<div class="r" style="left:2344px;top:1635px;width:42px;height:57px;border:2px solid #eeefef;box-sizing:border-box;background:transparent;"></div>
<div class="t" style="left:2265.0px;width:200px;text-align:center;top:1652.31px;font-size:30px;line-height:30px;color:#5bb9e7;font-weight:700;letter-spacing:0.9px;">3</div>
<div class="r" style="left:2425px;top:1635px;width:57px;height:57px;border:2px solid #eeefef;box-sizing:border-box;background:transparent;"></div>
<div class="t" style="left:2353.5px;width:200px;text-align:center;top:1652.31px;font-size:30px;line-height:30px;color:#5bb9e7;font-weight:700;letter-spacing:0.9px;">...</div>
<div class="r" style="left:2523px;top:1635px;width:96px;height:57px;border:2px solid #eeefef;box-sizing:border-box;background:transparent;"></div>
<div class="t" style="left:2471.0px;width:200px;text-align:center;top:1652.31px;font-size:30px;line-height:30px;color:#5bb9e7;font-weight:700;letter-spacing:0.9px;">Next</div>
</div></div></body></html>
